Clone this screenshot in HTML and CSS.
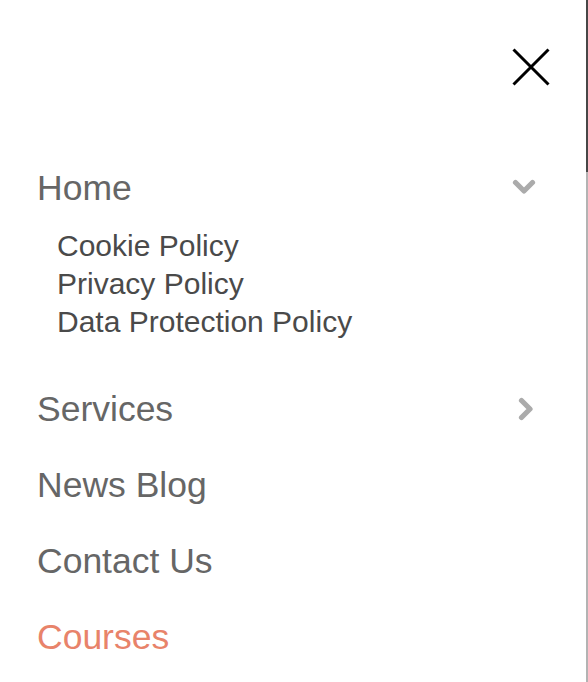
FILE: index.html
```html
<!DOCTYPE html>
<html lang="en">
<head>
<meta charset="utf-8">
<title>Menu</title>
<link rel="stylesheet" href="styles.css">
</head>
<body>
<div class="screen">
  <aside class="panel">
    <div class="panel-head">
      <button class="close" aria-label="Close menu">
        <svg width="38" height="38" viewBox="0 0 38 38"><path d="M1.5 1.5 L36.5 36.5 M36.5 1.5 L1.5 36.5" stroke="#000" stroke-width="3" fill="none"/></svg>
      </button>
    </div>
    <nav class="menu">
      <div class="item">
        <a class="item-link">Home</a>
        <span class="chev chev-down">
          <svg width="24" height="16" viewBox="0 0 24 16"><polyline points="3.5,3.5 12,12 20.5,3.5" fill="none" stroke="#ababab" stroke-width="5.2" stroke-linecap="round" stroke-linejoin="round"/></svg>
        </span>
      </div>
      <ul class="submenu">
        <li>Cookie Policy</li>
        <li>Privacy Policy</li>
        <li>Data Protection Policy</li>
      </ul>
      <div class="item">
        <a class="item-link">Services</a>
        <span class="chev chev-right">
          <svg width="16" height="24" viewBox="0 0 16 24"><polyline points="3.5,3.5 12,12 3.5,20.5" fill="none" stroke="#ababab" stroke-width="5.2" stroke-linecap="round" stroke-linejoin="round"/></svg>
        </span>
      </div>
      <div class="item"><a class="item-link">News Blog</a></div>
      <div class="item"><a class="item-link">Contact Us</a></div>
      <div class="item"><a class="item-link active">Courses</a></div>
    </nav>
  </aside>
  <div class="edge"></div>
</div>
</body>
</html>
```

FILE: styles.css
```css
* { box-sizing: border-box; }
html, body {
  margin: 0;
  padding: 0;
  background: #fff;
}
body {
  font-family: "Liberation Sans", Arial, Helvetica, sans-serif;
}
.screen {
  display: flex;
  width: 588px;
  height: 682px;
  overflow: hidden;
}
.panel {
  flex: 1;
  padding: 0 37px 0 37px;
  background: #fff;
}
.panel-head {
  display: flex;
  justify-content: flex-end;
  padding-top: 48px;
  margin-bottom: 64px;
}
.close {
  display: block;
  width: 38px;
  height: 38px;
  padding: 0;
  margin-right: -1px;
  border: 0;
  background: none;
}
.close svg { display: block; }
.menu {
  display: flex;
  flex-direction: column;
}
.item {
  display: flex;
  align-items: center;
  justify-content: space-between;
  height: 76px;
}
.item-link {
  font-size: 35.5px;
  line-height: 76px;
  color: #666;
  text-decoration: none;
}
.item-link.active {
  color: #e8836a;
}
.chev {
  display: flex;
  align-items: center;
  justify-content: center;
  width: 24px;
  height: 24px;
  margin-right: 13px;
}
.chev-down {
  margin-top: -2px;
}
.chev-right {
  justify-content: flex-end;
  padding-right: 2px;
}
.chev svg { display: block; }
.submenu {
  list-style: none;
  margin: 1px 0 30px 0;
  padding: 0 0 0 20px;
}
.submenu li {
  font-size: 30px;
  line-height: 38px;
  color: #4a4a4a;
}
.edge {
  width: 2px;
  height: 682px;
  background: linear-gradient(#474747 0, #474747 172px, #b3b3b3 172px, #b3b3b3 100%);
}
```
